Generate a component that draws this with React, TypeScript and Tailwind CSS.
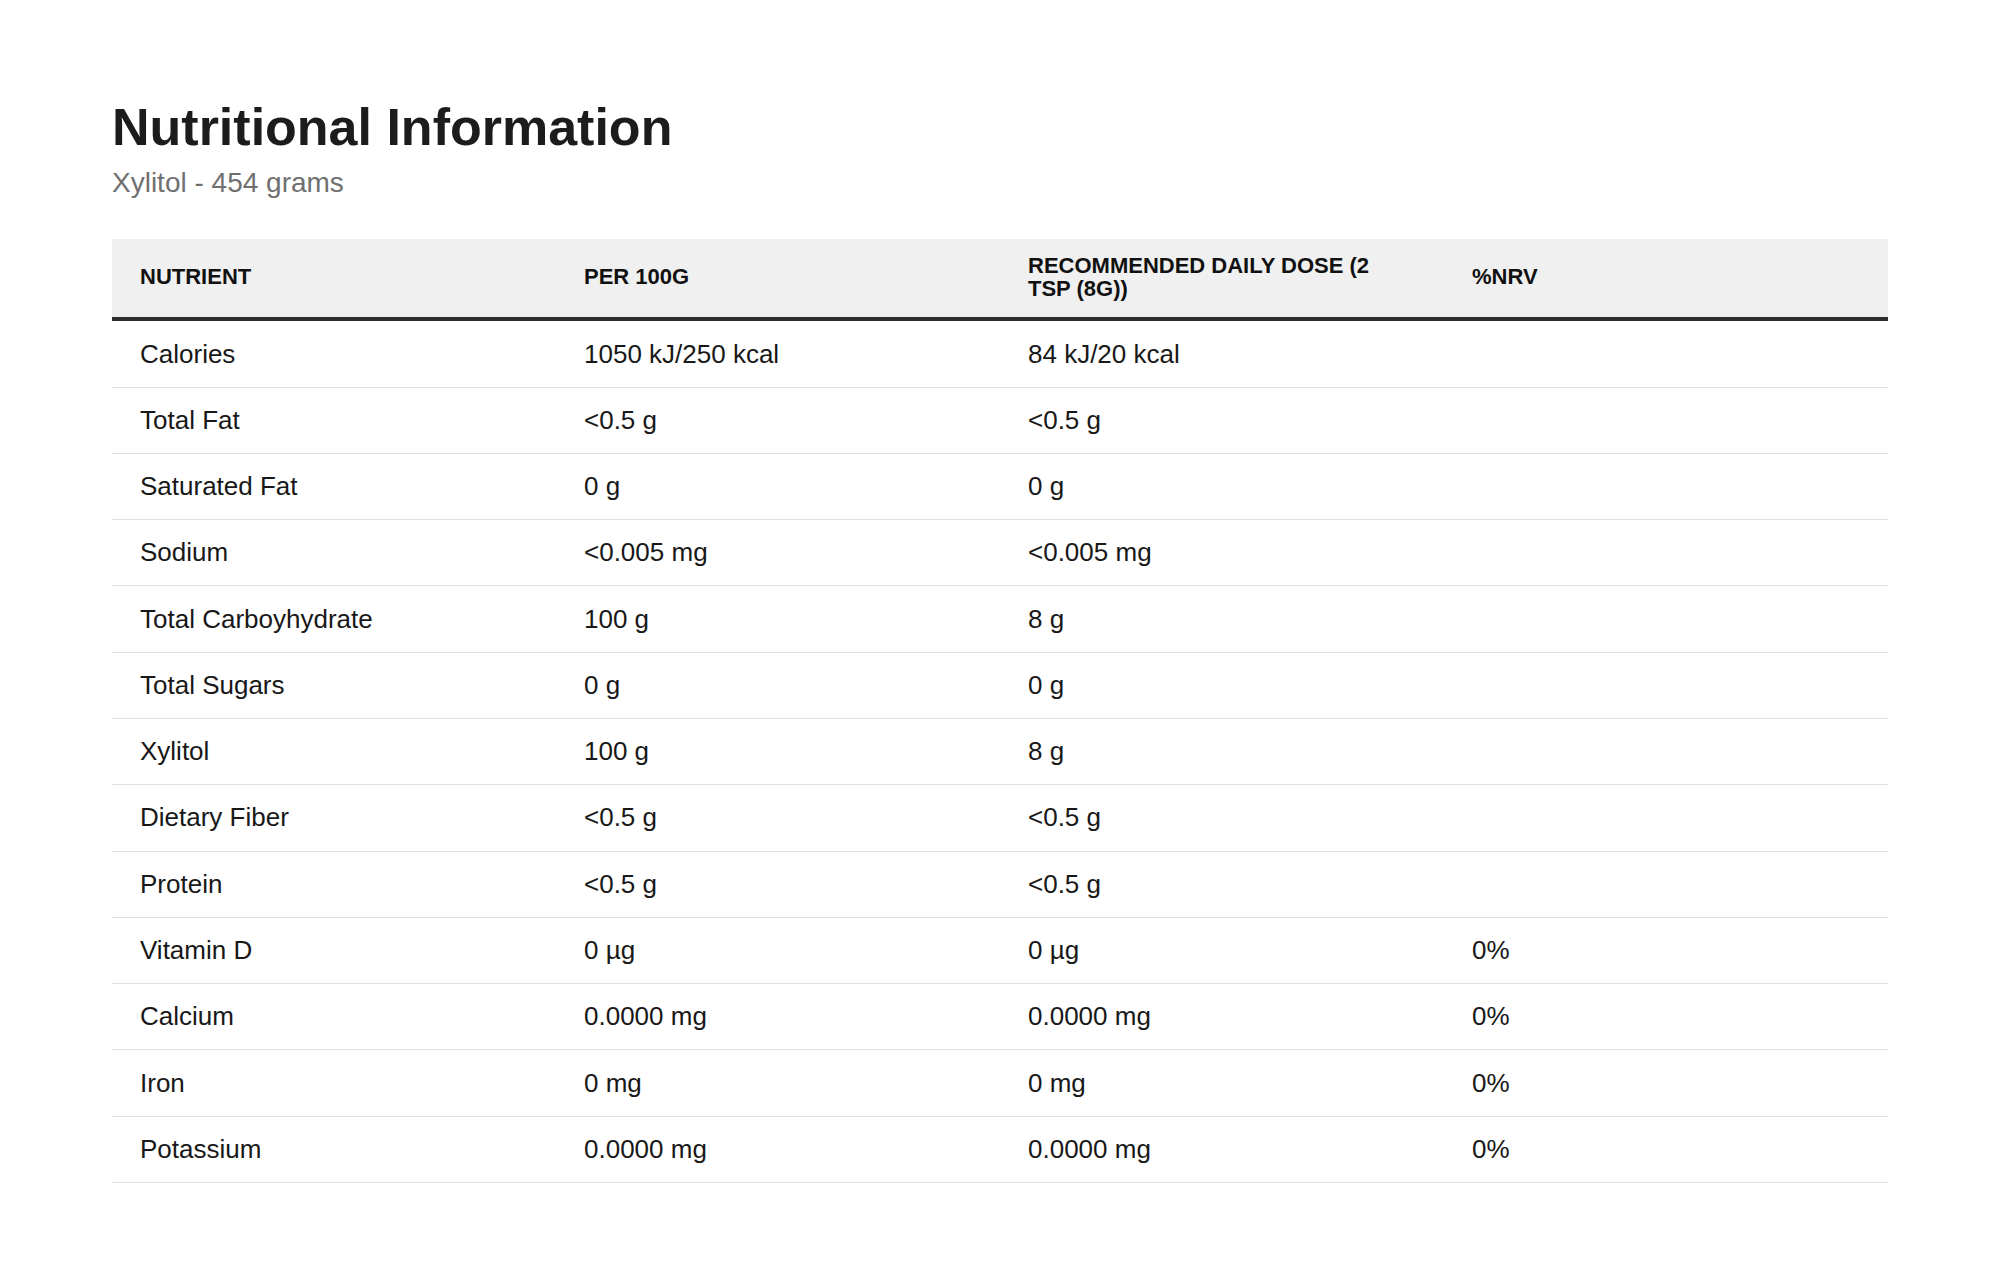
import React from "react";

const rows: [string, string, string, string][] = [
  ["Calories", "1050 kJ/250 kcal", "84 kJ/20 kcal", ""],
  ["Total Fat", "<0.5 g", "<0.5 g", ""],
  ["Saturated Fat", "0 g", "0 g", ""],
  ["Sodium", "<0.005 mg", "<0.005 mg", ""],
  ["Total Carboyhydrate", "100 g", "8 g", ""],
  ["Total Sugars", "0 g", "0 g", ""],
  ["Xylitol", "100 g", "8 g", ""],
  ["Dietary Fiber", "<0.5 g", "<0.5 g", ""],
  ["Protein", "<0.5 g", "<0.5 g", ""],
  ["Vitamin D", "0 \u00b5g", "0 \u00b5g", "0%"],
  ["Calcium", "0.0000 mg", "0.0000 mg", "0%"],
  ["Iron", "0 mg", "0 mg", "0%"],
  ["Potassium", "0.0000 mg", "0.0000 mg", "0%"],
];

const headers = ["NUTRIENT", "PER 100G", "RECOMMENDED DAILY DOSE (2 TSP (8G))", "%NRV"];

export default function App() {
  return (
    <div className="min-h-screen bg-white font-['Liberation_Sans',Arial,sans-serif] pt-[95.7px] px-[112px]">
      <h1 className="text-[52px] leading-[63.6px] font-bold text-[#1c1c1c]">
        Nutritional Information
      </h1>
      <p className="mt-[3.5px] text-[28px] leading-[39.2px] text-[#707070]">Xylitol - 454 grams</p>
      <table className="mt-[36.6px] w-full table-fixed border-separate border-spacing-0">
        <thead>
          <tr className="bg-[#f0f0f0]">
            {headers.map((h) => (
              <th
                key={h}
                className="text-left align-middle text-[22px] leading-[23.6px] font-bold text-[#111111] pl-[28px] pr-[40px] pt-[15px] pb-[16.6px] border-b-4 border-[#2d2d2d]"
              >
                {h}
              </th>
            ))}
          </tr>
        </thead>
        <tbody>
          {rows.map((r) => (
            <tr key={r[0]}>
              {r.map((c, i) => (
                <td
                  key={i}
                  className="text-left align-middle text-[26px] leading-[39px] text-[#181818] pl-[28px] pr-[28px] py-[13.15px] border-b border-[#e0e0e0]"
                >
                  {c}
                </td>
              ))}
            </tr>
          ))}
        </tbody>
      </table>
    </div>
  );
}
